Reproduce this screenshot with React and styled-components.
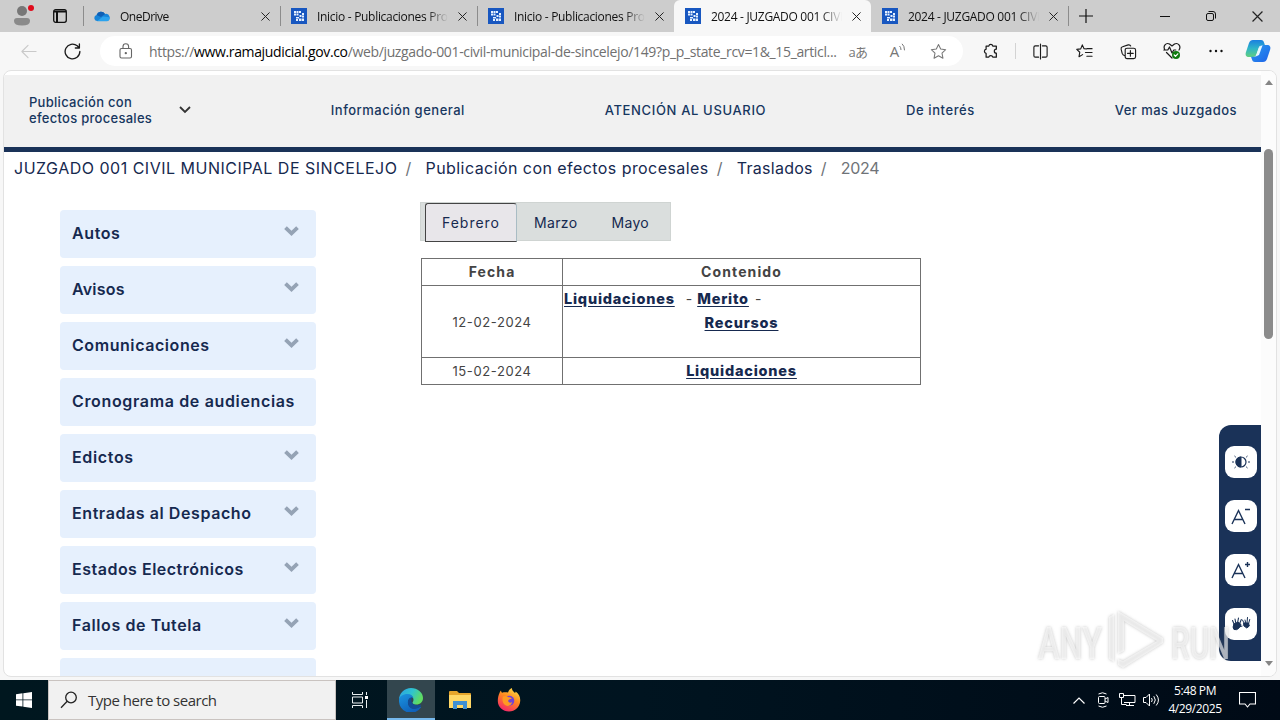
import React from 'react'
import styled, { createGlobalStyle, css } from 'styled-components'

const TABS = [
  { title: 'OneDrive', icon: 'cloud', ls: -0.5 },
  { title: 'Inicio - Publicaciones Pro', icon: 'rama' },
  { title: 'Inicio - Publicaciones Pro', icon: 'rama' },
  { title: '2024 - JUZGADO 001 CIVI', icon: 'rama', active: true },
  { title: '2024 - JUZGADO 001 CIVI', icon: 'rama' },
]

const MENU = [
  { label: 'Autos', open: true, ls: 0.6 },
  { label: 'Avisos', open: true, ls: 0.2 },
  { label: 'Comunicaciones', open: true, ls: 0.57 },
  { label: 'Cronograma de audiencias', ls: 0.65 },
  { label: 'Edictos', open: true, ls: 0.65 },
  { label: 'Entradas al Despacho', open: true, ls: 0.58 },
  { label: 'Estados Electrónicos', open: true, ls: 0.5 },
  { label: 'Fallos de Tutela', open: true, ls: 0.6 },
  { label: 'Listado de procesos judicial', open: true, ls: 0 },
]

const CloudIcon = () => (
  <svg width="16" height="16" viewBox="0 0 16 16">
    <path d="M3 13a3 3 0 0 1-.4-5.9A4.600 4.600 0 0 1 11 6a3.600 3.600 0 0 1 2 7z" fill="#1784d8" />
    <path d="M2.600 7.100A4.600 4.600 0 0 1 11 6L7 9z" fill="#0f5fb5" />
    <path d="M3 13.200h9.800a2.900 2.900 0 0 0 2.600-4L9 8.400z" fill="#2ba3ee" />
  </svg>
)

const RamaIcon = () => (
  <svg width="16" height="16" viewBox="0 0 16 16">
    <path d="M0 0h16v16H0z" fill="#1857c0" />
    <path
      d="M3 3h2v2H3zM5.500 3h2v2h-2zM8 3h2v2H8zM3 5.500h2v2H3zM5.500 5.500h2v2h-2zM11 5h2v2h-2zM8.500 7h2v2h-2zM11 7.500h2v2h-2zM5 9h3v1.500H5zM5 11h2v2H5zM8 10.500h2V13H8zM10.500 10.500H13V13h-2.500z"
      fill="#e6f1ff"
    />
  </svg>
)

const CrossIcon = ({ size = 9 }) => (
  <svg width={size} height={size} viewBox="0 0 10 10" fill="none" stroke="#222" strokeWidth="1.1">
    <path d="M.5.5l9 9M9.500.5l-9 9" />
  </svg>
)

const Glyph = ({ children, size = 18, color = '#1b1b1b', width = 1.2 }) => (
  <svg width={size} height={size} viewBox="0 0 18 18" fill="none" stroke={color} strokeWidth={width} strokeLinecap="round" strokeLinejoin="round">
    {children}
  </svg>
)

const CopilotIcon = () => (
  <svg width="26" height="26" viewBox="0 0 26 26">
    <defs>
      <linearGradient id="cpa" x1="0" y1="0" x2="0" y2="1">
        <stop offset="0" stopColor="#1a7fe0" />
        <stop offset=".5" stopColor="#2fb5c8" />
        <stop offset="1" stopColor="#62cf7f" />
      </linearGradient>
      <linearGradient id="cpb" x1="0" y1="0" x2="1" y2="1">
        <stop offset="0" stopColor="#2a9cf0" />
        <stop offset="1" stopColor="#1f62e8" />
      </linearGradient>
    </defs>
    <path d="M8 2h8c2 0 2.600 1 3.200 3l.8 2.500h-3c-2 0-3 1-3.600 3L11.500 16c-.6 2-1.500 3-3.500 3H4c-3 0-4-2-3-5L4 5c.8-2 2-3 4-3z" fill="url(#cpa)" />
    <path d="M18 24h-8c-2 0-2.600-1-3.200-3L6 18.800h3c2 0 3-1 3.600-3L14.500 10c.6-2 1.500-3 3.500-3h4c3 0 4 2 3 5l-3 9c-.8 2-2 3-4 3z" fill="url(#cpb)" />
    <path d="M14.600 8.500l3-1.300-3.600 9.800-3.200 1.600z" fill="#e8f7ff" />
  </svg>
)

const BoldChevron = () => (
  <svg width="15" height="10" viewBox="0 0 15 10" fill="none" stroke="#95a3b5" strokeWidth="3.800">
    <path d="M1.500 1.600l6 5.700 6-5.700" />
  </svg>
)

const EdgeIcon = () => (
  <svg width="24" height="24" viewBox="0 0 24 24">
    <defs>
      <linearGradient id="ega" x1="0" y1="0" x2="1" y2=".4">
        <stop offset="0" stopColor="#2b9fe4" />
        <stop offset=".55" stopColor="#2fc3d0" />
        <stop offset="1" stopColor="#5fdc62" />
      </linearGradient>
      <linearGradient id="egb" x1="0" y1="0" x2=".6" y2="1">
        <stop offset="0" stopColor="#1b95e0" />
        <stop offset="1" stopColor="#0f5fb8" />
      </linearGradient>
    </defs>
    <path d="M0 12C0 5 5.500 0 12 0s12 4.500 12 10c0 4-3 6.500-6.500 6.500-2.500 0-4-.8-4-1.800 0-.8 1-1.200 1-3C14.500 9 12 7 9 7c-5 0-9 3-9 5z" fill="url(#ega)" />
    <path d="M0 12c0-3.500 4-6 8.500-6 3.600 0 5.500 2 5.800 4C11 8.500 8.500 12 9 15c.6 4 4.500 6.500 9 5 1.500-.5 2.800-1.200 3.600-1.300.5 0 .7.4.3.9A12 12 0 0 1 0 12z" fill="url(#egb)" />
    <path d="M9 15c-.4-3 1.500-6 4.300-5.800-1.500 1.500-1.300 4.800.3 6.300 2 2 5.400 2 7.400 1.200.8-.3 1.200.4.8 1C20 20 17.500 21 15 21c-3.500 0-5.700-2.500-6-6z" fill="#134c96" />
  </svg>
)

const FolderIcon = () => (
  <svg width="22" height="20" viewBox="0 0 22 20">
    <path d="M0 2q0-1 1-1h7l2 2h11q1 0 1 1v14H0z" fill="#e6a52b" />
    <path d="M0 5h22v13H0z" fill="#ffd766" />
    <path d="M4 19v-8h14v8h-4v-4H8v4z" fill="#3f8fd2" />
  </svg>
)

const FirefoxIcon = () => (
  <svg width="24" height="24" viewBox="0 0 24 24">
    <defs>
      <linearGradient id="ffa" x1=".8" y1="0" x2=".3" y2="1">
        <stop offset="0" stopColor="#ffe14a" />
        <stop offset=".45" stopColor="#ff8a1f" />
        <stop offset="1" stopColor="#f5246a" />
      </linearGradient>
    </defs>
    <path d="M2.500 5c.3-1 1-2 1.500-2.400 0 1 .4 1.700 1 2.200C7 4.200 9 4.300 11 4.500 11.500 2.500 13 .8 15 0c-.2 2 1 3 3 5 .6-.4.7-1 .6-1.500C22 6 23.500 9 23.200 13c-.4 6-5.200 10.500-11.200 10.500S.8 19 .8 13c0-3 .6-6 1.700-8z" fill="url(#ffa)" />
    <circle cx="12.300" cy="12.700" r="5" fill="#7142d6" />
    <path d="M6 8.500c2-1 4-.6 5.500.7 2 0 3 .6 3.300 1.300-1.300.8-3.300.7-3.600 2.200-.3 1.800 2.500 2.500 4 1.400-.6 3-3.700 4.800-6.700 3.200C5.500 15.800 4.800 11 6 8.500z" fill="#ff9a22" />
  </svg>
)

function BrowserTab({ tab }) {
  return (
    <TabBox $active={tab.active}>
      {tab.icon === 'cloud' ? <CloudIcon /> : <RamaIcon />}
      <TabTitle $ls={tab.ls}>{tab.title}</TabTitle>
      <CrossIcon />
    </TabBox>
  )
}

function Browser() {
  return (
    <>
      <TabStrip>
        <Profile>
          <svg width="20" height="22" viewBox="0 0 20 22">
            <circle cx="10" cy="6" r="5" fill="#777" />
            <path d="M2 16q0-3 3-3h10q3 0 3 3 0 4.500-8 4.500T2 16z" fill="#8a8a8a" />
          </svg>
          <AlertDot />
        </Profile>
        <Workspaces>
          <svg width="14" height="14" viewBox="0 0 14 14" fill="none" stroke="#111" strokeWidth="1.300">
            <rect x=".7" y=".7" width="12.600" height="12.600" rx="2" />
            <path d="M1 2.500h12M4 3v10.500" strokeWidth="2" />
          </svg>
        </Workspaces>
        {TABS.map((tab, i) => <BrowserTab key={i} tab={tab} />)}
        <NewTab>
          <svg width="14" height="14" viewBox="0 0 14 14" stroke="#111" strokeWidth="1.200"><path d="M7 0v14M0 7h14" /></svg>
        </NewTab>
        <WindowButtons>
          <svg width="10" height="10" viewBox="0 0 10 10" stroke="#111"><path d="M0 5.500h10" /></svg>
          <svg width="10" height="10" viewBox="0 0 10 10" fill="none" stroke="#111">
            <rect x=".5" y="2.500" width="7" height="7" rx="1.500" />
            <path d="M2.500.5H7q2.500 0 2.500 2.500v4.500" />
          </svg>
          <CrossIcon size={11} />
        </WindowButtons>
      </TabStrip>
      <Toolbar>
        <NavButton><Glyph size={17} color="#c9c9c9"><path d="M17 9H2M8.500 2.500L2 9l6.500 6.500" /></Glyph></NavButton>
        <NavButton><Glyph size={17} width="1.400"><path d="M16.800 9A7.800 7.800 0 1 1 14 3l2 2M16.300 1v4.300H12" /></Glyph></NavButton>
        <AddressBar>
          <Lock>
            <svg width="14" height="16" viewBox="0 0 14 16" fill="none" stroke="#666" strokeWidth="1.100">
              <rect x="1" y="5.500" width="11.500" height="9.500" rx="1.500" />
              <path d="M4 5.500V3.600a2.800 2.800 0 0 1 5.600 0v1.900" />
              <circle cx="6.800" cy="10.200" r=".6" fill="#666" />
            </svg>
          </Lock>
          <Url>
            https://<b>www.ramajudicial.gov.co</b>/web/juzgado-001-civil-municipal-de-sincelejo/149?p_p_state_rcv=1&amp;_15_articl...
          </Url>
          <BarIcon><Translate>aあ</Translate></BarIcon>
          <BarIcon>
            <ReadAloud>A</ReadAloud>
            <svg width="7" height="10" viewBox="0 0 7 10" fill="none" stroke="#777">
              <path d="M.5 3q1.500 1.200 1.500 4M3 .8q2.500 2 2.500 6.500" />
            </svg>
          </BarIcon>
          <BarIcon>
            <Glyph color="#777" width="1.100" size={17}><path d="M9 1.500l2.300 4.900 5.300.7-3.900 3.700 1 5.300L9 13.500l-4.700 2.600 1-5.300L1.400 7.100l5.300-.7z" /></Glyph>
          </BarIcon>
        </AddressBar>
        <Actions>
          <Action>
            <Glyph size={16} width="1.400"><path d="M3.500 3.500h3a2.300 2.300 0 0 1 4.500 0h4V7a2 2 0 0 0 0 4.500V16h-4a2.300 2.300 0 0 0-4.500 0h-3v-4.300a2.400 2.400 0 0 1 0-4.700z" /></Glyph>
          </Action>
          <ActionRule />
          <Action>
            <Glyph size={17}><path d="M7 3H3.500Q2 3 2 4.500v9Q2 15 3.500 15H7M11 3h3.500Q16 3 16 4.500v9q0 1.500-1.500 1.500H11M9 1v16" /></Glyph>
          </Action>
          <Action>
            <Glyph size={17}><path d="M11 6.300L8.500 6 6.700 2 5 6.200l-4.200.6L4 9.800l-.8 4.700L7 12.300M11.500 6H17M10 10h7M11.500 14H17" /></Glyph>
          </Action>
          <Action>
            <Glyph size={17}><path d="M5 13.500Q3 13 2.300 11L1.200 6.500Q.8 4.500 2.700 4l6-2q2-.4 2.600 1.200M7.500 5.500h7q2 0 2 2v7q0 2-2 2h-7q-2 0-2-2v-7q0-2 2-2zM11 8v6M8 11h6" /></Glyph>
          </Action>
          <Action>
            <Glyph>
              <path d="M2 8C-.5 4 3 .3 6.500 2L9 4l2.500-2C15 .3 18.500 4 16 8M.8 8h4l1.700-3 2.500 6 1.800-3h2M3.500 10.500L9 16" />
              <circle cx="13" cy="13" r="4" fill="#107c10" stroke="none" />
              <path d="M11.200 13l1.300 1.300 2.300-2.500" stroke="#fff" />
            </Glyph>
          </Action>
          <Action>
            <svg width="14" height="4" viewBox="0 0 14 4" fill="#111"><circle cx="1.500" cy="2" r="1.200" /><circle cx="7" cy="2" r="1.200" /><circle cx="12.500" cy="2" r="1.200" /></svg>
          </Action>
          <Action><CopilotIcon /></Action>
        </Actions>
      </Toolbar>
    </>
  )
}

function Page() {
  return (
    <Frame>
      <Site>
        <SiteNav>
          <NavItem $wide>
            <NavLabel $ls={0.28}>Publicación con<br />efectos procesales</NavLabel>
            <svg width="12" height="8" viewBox="0 0 12 8" fill="none" stroke="#333" strokeWidth="1.800"><path d="M1 1l5 5 5-5" /></svg>
          </NavItem>
          <NavItem><NavLabel $ls={0.5}>Información general</NavLabel></NavItem>
          <NavItem><NavLabel $ls={0.65}>ATENCIÓN AL USUARIO</NavLabel></NavItem>
          <NavItem><NavLabel $ls={0.6}>De interés</NavLabel></NavItem>
          <NavItem><NavLabel $ls={0.47}>Ver mas Juzgados</NavLabel></NavItem>
        </SiteNav>
        <Breadcrumb>
          <Crumb $ls={0.5}>JUZGADO 001 CIVIL MUNICIPAL DE SINCELEJO</Crumb>
          <Slash>/</Slash>
          <Crumb $ls={0.44}>Publicación con efectos procesales</Crumb>
          <Slash>/</Slash>
          <Crumb $ls={0.28}>Traslados</Crumb>
          <Slash>/</Slash>
          <Crumb $muted $ls={-0.3}>2024</Crumb>
        </Breadcrumb>
        <Body>
          <Sidebar>
            {MENU.map(item => (
              <MenuItem key={item.label}>
                <MenuLabel $ls={item.ls}>{item.label}</MenuLabel>
                {item.open && <BoldChevron />}
              </MenuItem>
            ))}
          </Sidebar>
          <Main>
            <MonthTabs>
              <Month $active>Febrero</Month>
              <Month>Marzo</Month>
              <Month>Mayo</Month>
            </MonthTabs>
            <Table>
              <HeadCell>Fecha</HeadCell>
              <HeadCell>Contenido</HeadCell>
              <DateCell>12-02-2024</DateCell>
              <Cell>
                <LinkLine>
                  <DocLink>Liquidaciones</DocLink>
                  <Dash $gap={11}>-</Dash>
                  <DocLink>Merito</DocLink>
                  <Dash>-</Dash>
                </LinkLine>
                <LinkLine $center><DocLink>Recursos</DocLink></LinkLine>
              </Cell>
              <DateCell>15-02-2024</DateCell>
              <Cell><LinkLine $center><DocLink>Liquidaciones</DocLink></LinkLine></Cell>
            </Table>
          </Main>
        </Body>
        <AccessBar>
          <AccessButton>
            <svg width="18" height="14" viewBox="0 0 18 14" fill="none" stroke="#1a3258">
              <circle cx="9" cy="7" r="5" strokeWidth="1.200" />
              <path d="M9 2a5 5 0 0 0 0 10z" fill="#1a3258" />
              <path d="M0 7h2M16 7h2M2.500 1l1.300 1.200M15.500 1l-1.300 1.200M2.500 13l1.300-1.200M15.500 13l-1.300-1.200" />
            </svg>
          </AccessButton>
          <AccessButton>
            <svg width="20" height="18" viewBox="0 0 20 18" fill="none" stroke="#1a3258" strokeWidth="1.400"><path d="M1 17L7.500 3.500 14 17M3.300 12.500h8.400M14 2.500h5" /></svg>
          </AccessButton>
          <AccessButton>
            <svg width="20" height="18" viewBox="0 0 20 18" fill="none" stroke="#1a3258" strokeWidth="1.400"><path d="M1 17L7.500 3.500 14 17M3.300 12.500h8.400M14 3.500h5M16.500 1v5" /></svg>
          </AccessButton>
          <AccessButton>
            <svg width="20" height="16" viewBox="0 0 20 16" fill="#1a3258" stroke="#1a3258" strokeLinecap="round">
              <path d="M3 8l4-2 3 2.500L8 12q-2 2.500-5 1.500-2-2 0-5.500z" />
              <path d="M3.500 9L1.500 4.500M5 8L4 3M6.500 7l1-5M8.500 8l1.800-4.500M8 11l3-1" strokeWidth="1.100" />
              <path d="M13 7h4.500l.8 3-2.500 2L13 10z" />
              <path d="M13.500 8L11.500 4M14.700 7l-.7-3M16 7l.5-5.500M17.500 8l1.200-4.500" strokeWidth="1" />
            </svg>
          </AccessButton>
        </AccessBar>
      </Site>
      <Scrollbar>
        <Arrow />
        <Thumb />
        <Arrow $down />
      </Scrollbar>
    </Frame>
  )
}

function Taskbar() {
  return (
    <TaskRow>
      <Start>
        <svg width="16" height="16" viewBox="0 0 16 16" fill="#fff"><path d="M0 2.200l6.500-.9v6.200H0zM7.300 1.200L16 0v7.500H7.300zM0 8.300h6.500v6.300L0 13.700zM7.300 8.300H16V16l-8.700-1.200z" /></svg>
      </Start>
      <Search>
        <svg width="18" height="18" viewBox="0 0 18 18" fill="none" stroke="#222" strokeWidth="1.300"><circle cx="11" cy="6.500" r="5.300" /><path d="M7.200 10.300L1 16.700" /></svg>
        <span>Type here to search</span>
      </Search>
      <TaskButton>
        <svg width="17" height="16" viewBox="0 0 17 16" fill="none" stroke="#e8eef0"><path d="M.5 0v2.500h10V0M.5 5h10v6H.5zM.5 16v-2.500h10V16M14.500 0v3M14.500 8v8" /><path d="M13 4h3v3h-3z" fill="#fff" stroke="none" /></svg>
      </TaskButton>
      <TaskButton $active><EdgeIcon /></TaskButton>
      <TaskButton><FolderIcon /></TaskButton>
      <TaskButton><FirefoxIcon /></TaskButton>
      <Tray>
        <TrayIcon><svg width="12" height="7" viewBox="0 0 12 7" fill="none" stroke="#fff" strokeWidth="1.200"><path d="M.5 6.500L6 1l5.500 5.500" /></svg></TrayIcon>
        <TrayIcon>
          <svg width="12" height="16" viewBox="0 0 12 16" fill="none" stroke="#fff"><rect x="1.500" y="4.500" width="6.500" height="7" rx="1" /><path d="M8 7l3-1.500v5L8 9M1.500 2q4-2.500 8 0M1.500 14q4 2.500 8 0" /></svg>
        </TrayIcon>
        <TrayIcon>
          <svg width="17" height="14" viewBox="0 0 17 14" fill="none" stroke="#fff"><path d="M5 2.500h11v7H5M.5.5h4v4h-4zM2.500 4.500v7h5M7 12.500h8M10.500 10v2.500" /></svg>
        </TrayIcon>
        <TrayIcon>
          <svg width="17" height="14" viewBox="0 0 17 14" fill="none" stroke="#fff"><path d="M.5 4.500h2.500L6.500 1v12L3 9.500H.5zM8.500 5q1.500 2 0 4M10.800 3.200q3 3.800 0 7.600M13.200 1.500q4.500 5.500 0 11" /></svg>
        </TrayIcon>
        <Clock><span>5:48 PM</span><span>4/29/2025</span></Clock>
        <Notice>
          <svg width="17" height="16" viewBox="0 0 17 16" fill="none" stroke="#fff" strokeWidth="1.100"><path d="M.5.5h16v11.500H11L8.500 15 6 12H.5z" /></svg>
        </Notice>
      </Tray>
    </TaskRow>
  )
}

const Watermark = () => (
  <Stamp>
    <svg width="200" height="66" viewBox="0 0 200 66">
      <g fill="#fff" fillOpacity=".6">
        <text x="3" y="51" fontSize="45" textLength="64" lengthAdjust="spacingAndGlyphs">ANY</text>
        <text x="136" y="51" fontSize="45" textLength="59" lengthAdjust="spacingAndGlyphs">RUN</text>
        <path d="M74 9l5-3v48l-5-3zM83 3l45 27v5L88 60l-5-3v-6l5 2 34-20-33-20v30l-6 3z" />
      </g>
    </svg>
  </Stamp>
)

export default function App() {
  return (
    <Screen>
      <GlobalStyle />
      <Browser />
      <Page />
      <Taskbar />
      <Watermark />
    </Screen>
  )
}

const GlobalStyle = createGlobalStyle`
body{ margin:0; overflow:hidden; }
*{ box-sizing:border-box; }
svg{ display:block; flex:none; }
`
const Screen = styled.div`
position:relative;
display:flex;
flex-direction:column;
width:1280px;
height:720px;
overflow:hidden;
background:#f7f7f7;
font-family:"Open Sans", "Noto Sans", sans-serif;
`
const center = css`
display:flex;
align-items:center;
justify-content:center;
`
const TabStrip = styled.div`
display:flex;
flex:none;
height:32px;
background:#cdcdcd;
`
const Profile = styled.div`
${center}
position:relative;
width:43px;
`
const AlertDot = styled.i`
position:absolute;
top:5px;
left:28px;
width:6px;
height:6px;
border-radius:50%;
background:#e00b1c;
`
const Workspaces = styled.div`
${center}
width:40px;
padding-right:6px;
`
const TabBox = styled.div`
position:relative;
display:flex;
align-items:center;
width:197px;
padding:0 10px 0 11px;
background:${p => (p.$active ? '#f7f7f7' : 'none')};
border-radius:${p => (p.$active ? '6px 6px 0 0' : 0)};
&::before{
  content:"";
  position:absolute;
  left:0;
  top:6px;
  width:1px;
  height:20px;
  background:${p => (p.$active ? 'none' : '#8c8c8c')};
}
${p => p.$active && css`& + div::before{ display:none; }`}
`
const TabTitle = styled.span`
flex:1;
margin:0 10px;
overflow:hidden;
white-space:nowrap;
font-size:12px;
letter-spacing:${p => p.$ls || -0.3}px;
color:#111;
mask-image:linear-gradient(90deg, #000 84%, transparent 100%);
`
const NewTab = styled.div`
display:flex;
align-items:center;
padding-left:10px;
border-left:1px solid #8c8c8c;
height:20px;
margin-top:6px;
`
const WindowButtons = styled.div`
display:flex;
flex:1;
align-items:center;
justify-content:flex-end;
gap:36px;
padding-right:17px;
`
const Toolbar = styled.div`
display:flex;
flex:none;
align-items:center;
height:38px;
padding-left:6px;
`
const NavButton = styled.div`
${center}
width:44px;
`
const AddressBar = styled.div`
display:flex;
flex:none;
align-items:center;
width:863px;
height:30px;
margin-left:6px;
border-radius:15px;
background:#fff;
`
const Lock = styled.div`
display:flex;
flex:none;
width:49px;
padding-left:19px;
`
const Url = styled.div`
flex:1;
min-width:0;
white-space:nowrap;
font-size:14px;
letter-spacing:-0.35px;
color:#707070;
b{ font-weight:400; color:#000; }
`
const BarIcon = styled.div`
${center}
flex:none;
width:40px;
&:last-child{ margin-right:5px; }
`
const Translate = styled.span`
font-size:13px;
font-family:"Open Sans", "Noto Sans CJK JP", sans-serif;
color:#777;
letter-spacing:-0.5px;
`
const ReadAloud = styled.span`
font-size:15px;
color:#777;
& + svg{ margin-top:-6px; }
`
const Actions = styled.div`
display:flex;
align-items:center;
padding-left:6px;
`
const Action = styled.div`
${center}
flex:none;
width:44px;
&:last-child{ width:40px; }
`
const ActionRule = styled.i`
width:1px;
height:16px;
margin:0 2px;
background:#d3d3d3;
`
const Frame = styled.div`
display:flex;
flex:none;
width:1274px;
height:607px;
margin:0 3px 3px;
overflow:hidden;
border:1px solid #e2e2e2;
border-radius:8px;
background:#fff;
`
const Site = styled.div`
position:relative;
flex:none;
width:1257px;
padding-top:4px;
color:#16294f;
font-family:Inter, sans-serif;
`
const SiteNav = styled.div`
display:flex;
align-items:center;
justify-content:space-between;
height:77px;
padding:0 24px 2px 25px;
background:#f1f1f1;
border-bottom:5px solid #1a3258;
`
const NavItem = styled.div`
display:flex;
align-items:center;
justify-content:space-between;
width:${p => (p.$wide ? '162px' : 'auto')};
color:#17375f;
`
const NavLabel = styled.span`
font-size:13px;
line-height:16px;
font-weight:500;
white-space:nowrap;
letter-spacing:${p => p.$ls}px;
`
const Breadcrumb = styled.div`
display:flex;
height:58px;
padding:4px 0 0 10px;
font-size:16px;
line-height:24px;
`
const Crumb = styled.span`
white-space:nowrap;
letter-spacing:${p => p.$ls}px;
color:${p => (p.$muted ? '#6f7378' : '#16294f')};
`
const Slash = styled.span`
width:28px;
padding-left:8px;
color:#6f7378;
`
const Body = styled.div`
display:flex;
`
const Sidebar = styled.div`
display:flex;
flex-direction:column;
gap:8px;
width:256px;
margin-left:56px;
`
const MenuItem = styled.div`
display:flex;
align-items:center;
justify-content:space-between;
height:48px;
padding:0 17px 2px 12px;
border-radius:4px;
background:#e6f0fd;
svg{ margin-top:-5px; }
&:last-child{ padding-top:4px; }
`
const MenuLabel = styled.span`
font-size:16px;
font-weight:600;
white-space:nowrap;
letter-spacing:${p => p.$ls}px;
`
const Main = styled.div`
margin:-8px 0 0 104px;
`
const MonthTabs = styled.div`
display:flex;
width:251px;
height:39px;
padding-left:4px;
border:1px solid #cfd4d2;
background:#dadedd;
`
const Month = styled.div`
height:39px;
padding:0 16px;
border:1px solid ${p => (p.$active ? '#444' : 'transparent')};
border-right-color:${p => (p.$active ? '#a9bcc4' : 'transparent')};
border-radius:3px 3px 0 0;
background:${p => (p.$active ? '#e8e6ea' : 'none')};
font-size:14px;
line-height:37px;
letter-spacing:${p => (p.$active ? 0.98 : 0.35)}px;
`
const Table = styled.div`
display:grid;
grid-template-columns:141px 358px;
grid-template-rows:27px 72px 27px;
width:500px;
margin:17px 0 0 1px;
border-right:1px solid #707070;
border-bottom:1px solid #707070;
font-size:14px;
color:#444;
& > div{ border-left:1px solid #707070; border-top:1px solid #707070; }
`
const HeadCell = styled.div`
${center}
padding-bottom:2px;
font-weight:700;
letter-spacing:1.1px;
`
const DateCell = styled.div`
${center}
font-size:13px;
letter-spacing:0.6px;
&:nth-child(5){ padding-bottom:1px; }
`
const Cell = styled.div`
padding:1px;
`
const LinkLine = styled.div`
display:flex;
justify-content:${p => (p.$center ? 'center' : 'flex-start')};
height:24px;
line-height:24px;
`
const DocLink = styled.a`
font-size:14.5px;
font-weight:800;
letter-spacing:0.78px;
color:#16294f;
text-decoration:underline;
text-underline-offset:2px;
`
const Dash = styled.span`
margin:0 5px 0 ${p => p.$gap || 6}px;
`
const AccessBar = styled.div`
position:absolute;
right:0;
top:354px;
display:flex;
flex-direction:column;
align-items:center;
gap:22px;
width:42px;
height:236px;
padding:21px 0 0 2px;
border-radius:12px 0 0 12px;
background:#1a3258;
`
const AccessButton = styled.div`
${center}
width:32px;
height:32px;
border-radius:9px;
background:#fff;
`
const Scrollbar = styled.div`
display:flex;
flex-direction:column;
align-items:center;
width:15px;
padding:9px 0 10px;
background:#fcfcfc;
`
const Arrow = styled.i`
margin-top:${p => (p.$down ? 'auto' : 0)};
border:4.5px solid transparent;
border-${p => (p.$down ? 'top' : 'bottom')}:5px solid #858585;
border-${p => (p.$down ? 'bottom' : 'top')}:0;
`
const Thumb = styled.i`
width:9px;
height:190px;
margin-top:64px;
border-radius:5px;
background:#8b8b8b;
`
const TaskRow = styled.div`
display:flex;
flex:none;
height:40px;
background:linear-gradient(90deg, #00171f, #001420 50%, #000a16);
`
const Start = styled.div`
${center}
width:48px;
`
const Search = styled.div`
display:flex;
align-items:center;
gap:10px;
width:288px;
padding-left:11px;
border:1px solid #c9c3c0;
background:#f1f1f1;
font-size:15px;
letter-spacing:-0.5px;
color:#333;
`
const TaskButton = styled.div`
${center}
width:${p => (p.$active ? '48px' : '49px')};
&:nth-child(3){ width:51px; padding-right:3px; }
background:${p => (p.$active ? '#33464e' : 'none')};
box-shadow:${p => (p.$active ? 'inset 0 -2px #76b9ed' : 'none')};
`
const Tray = styled.div`
display:flex;
align-items:center;
margin-left:auto;
`
const TrayIcon = styled.div`
${center}
width:24px;
`
const Clock = styled.div`
display:flex;
flex-direction:column;
align-items:center;
width:64px;
font-size:12px;
line-height:18px;
letter-spacing:-0.4px;
color:#fff;
`
const Notice = styled.div`
${center}
width:53px;
padding-right:13px;
`
const Stamp = styled.div`
position:absolute;
left:1035px;
top:608px;
font-family:Roboto, sans-serif;
font-weight:500;
svg{ filter:drop-shadow(0 0 1.5px rgba(100, 100, 100, 0.6)); }
`
